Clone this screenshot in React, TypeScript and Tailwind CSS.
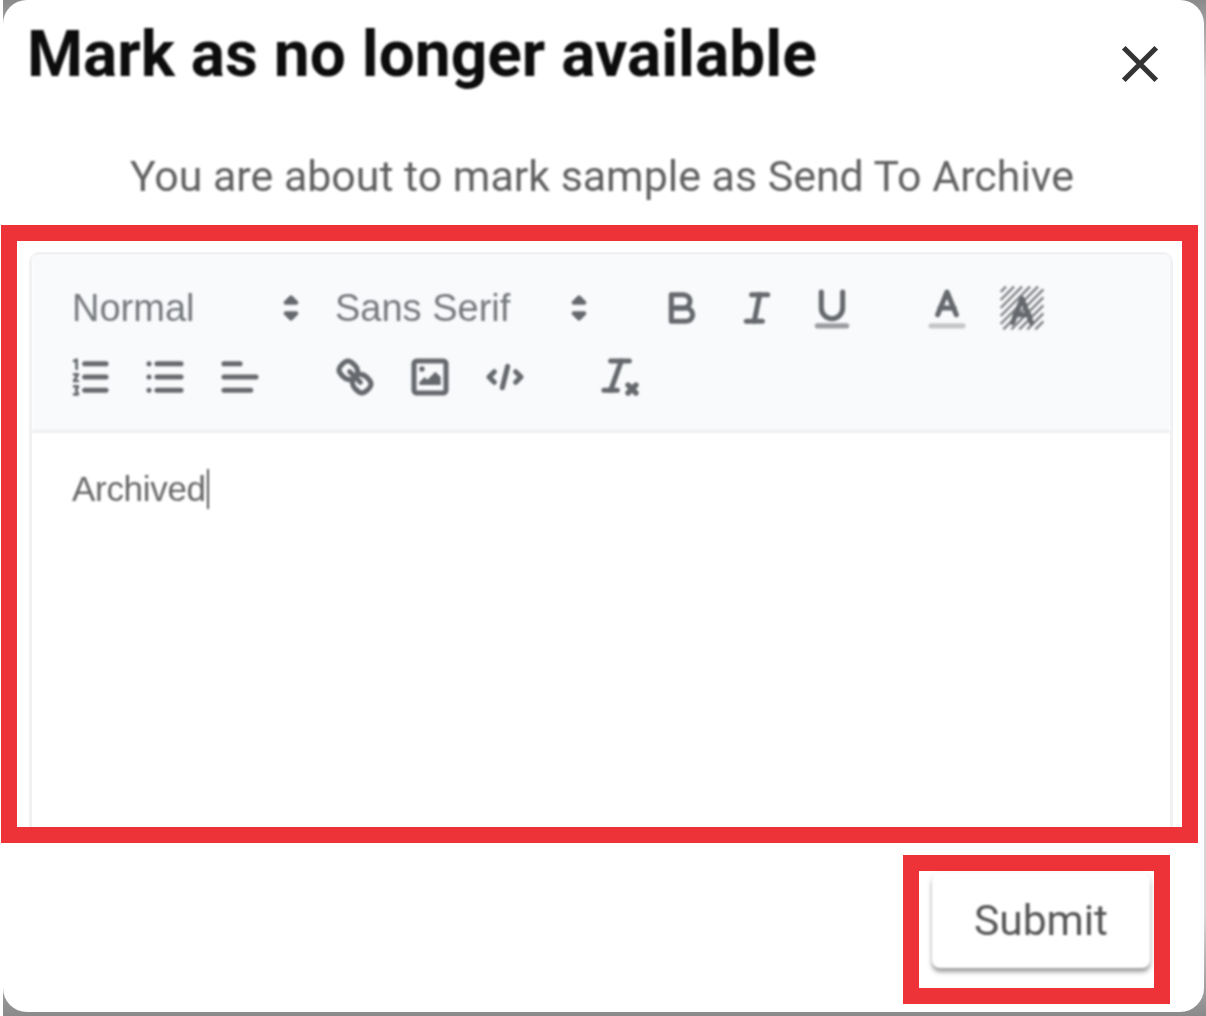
const iconStroke = "fill-none stroke-[#65686c] stroke-[1.9px] [stroke-linecap:round] [stroke-linejoin:round]";

function ToolIcon({ children }: { children: React.ReactNode }) {
  return (
    <button className="w-[75px] h-[64px] shrink-0 flex items-center justify-center">
      <svg viewBox="0 0 18 18" className={"w-[48px] h-[48px] " + iconStroke}>
        {children}
      </svg>
    </button>
  );
}

function Picker({ label, width }: { label: string; width: string }) {
  return (
    <div className={"relative h-[64px] shrink-0 flex items-center pl-[21px] " + width}>
      <span className="text-[38px] text-[#75787c] font-['Liberation_Sans',sans-serif]">{label}</span>
      <svg viewBox="0 0 18 18" className="absolute -right-[1px] top-[8px] w-[48px] h-[48px] fill-[#65686c] stroke-[#65686c] stroke-[1.5px] [stroke-linejoin:round]">
        <polygon points="7 11 9 13 11 11 7 11" />
        <polygon points="7 7 9 5 11 7 7 7" />
      </svg>
    </div>
  );
}

export default function App() {
  return (
    <div className="w-[1206px] h-[1016px] overflow-hidden pl-[3px] bg-[linear-gradient(to_right,#fff_3px,transparent_3px),linear-gradient(to_bottom,#8a8a8a,#d6d6d6_8%,#d6d6d6_90%,#8a8a8a)] font-['Roboto',sans-serif]">
      <div className="w-[1201px] h-[1012px] bg-white rounded-[24px] flex flex-col">
        {/* header */}
        <div className="h-[118px] pl-[24px] pr-[38px] flex items-start justify-between">
          <h1 className="mt-[18px] text-[64px] leading-[74px] font-bold text-[#0c0c0c] blur-[1px]">
            Mark as no longer available
          </h1>
          <svg viewBox="0 0 24 24" className="mt-[38px] w-[52px] h-[52px] fill-none stroke-[#333] stroke-[2.4px] blur-[0.6px]">
            <path d="M4.5 4.5 19.5 19.5M19.5 4.5 4.5 19.5" />
          </svg>
        </div>

        <p className="h-[107px] pt-[30px] pr-[3px] text-center text-[42.9px] leading-[56px] text-[#606060] blur-[1px]">
          You are about to mark sample as Send To Archive
        </p>

        {/* editor, with the red annotation frame round it */}
        <div className="-ml-[2px] w-[1197px] h-[618px] border-[16px] border-[#ee3338] pl-[12px] pr-[9px] pt-[11px] overflow-hidden">
          <div className="h-full border-[3px] border-b-0 border-[#f0f1f2] rounded-t-[10px]">
            <div className="h-[178px] bg-[#f9fafc] border-b-[3px] border-[#eeeff1] pl-[19px] pt-[21px] flex flex-wrap content-start gap-y-[5px] blur-[1.2px]">
              <Picker label="Normal" width="w-[263px]" />
              <Picker label="Sans Serif" width="w-[288px]" />
              <div className="ml-[42px] flex">
                <ToolIcon>
                  <path d="M5,4H9.5A2.5,2.5,0,0,1,12,6.5v0A2.5,2.5,0,0,1,9.5,9H5V4Z" />
                  <path d="M5,9h5.5A2.5,2.5,0,0,1,13,11.5v0A2.5,2.5,0,0,1,10.5,14H5V9Z" />
                </ToolIcon>
                <ToolIcon>
                  <line x1="7" x2="13" y1="4" y2="4" />
                  <line x1="5" x2="11" y1="14" y2="14" />
                  <line x1="8" x2="10" y1="14" y2="4" />
                </ToolIcon>
                <ToolIcon>
                  <path d="M5,3V9a4,4,0,0,0,4,4H9a4,4,0,0,0,4-4V3" />
                  <line x1="3.5" x2="14.5" y1="15.7" y2="15.7" className="stroke-[#9a9ca0]" />
                </ToolIcon>
              </div>
              <div className="ml-[40px] flex">
                <ToolIcon>
                  <line x1="3" x2="15" y1="15.7" y2="15.7" className="stroke-[#c4c6c8]" />
                  <polyline points="5.5 11.5 9 3 12.5 11.5" />
                  <line x1="11.63" x2="6.38" y1="9" y2="9" />
                </ToolIcon>
                <ToolIcon>
                  <g className="stroke-[#7d7f82] stroke-[0.9px] [stroke-linecap:butt]">
                    <path d="M1 3 3 1M1 6 6 1M1 9 9 1M1 12 12 1M1 15 15 1M2 17 17 2M5 17 17 5M8 17 17 8M11 17 17 11M14 17 17 14" />
                  </g>
                  <polyline points="5.5 14.5 9 5.5 12.5 14.5" />
                  <line x1="11.63" x2="6.38" y1="11.5" y2="11.5" />
                </ToolIcon>
              </div>
              <div className="w-full h-0" />
              <div className="flex ml-[1px] -mt-[5px]">
                <ToolIcon>
                  <line x1="7" x2="15" y1="4" y2="4" />
                  <line x1="7" x2="15" y1="9" y2="9" />
                  <line x1="7" x2="15" y1="14" y2="14" />
                  <path className="stroke-[1px]" d="M3 3 4 2.5V6M3 8h1.5L3 10.5h1.5M3 12.5h1.5L3.8 14l.7 1.5H3" />
                </ToolIcon>
                <ToolIcon>
                  <line x1="6" x2="15" y1="4" y2="4" />
                  <line x1="6" x2="15" y1="9" y2="9" />
                  <line x1="6" x2="15" y1="14" y2="14" />
                  <line x1="3" x2="3" y1="4" y2="4" />
                  <line x1="3" x2="3" y1="9" y2="9" />
                  <line x1="3" x2="3" y1="14" y2="14" />
                </ToolIcon>
                <ToolIcon>
                  <line x1="3" x2="15" y1="9" y2="9" />
                  <line x1="3" x2="13" y1="14" y2="14" />
                  <line x1="3" x2="9" y1="4" y2="4" />
                </ToolIcon>
              </div>
              <div className="ml-[40px] -mt-[5px] flex">
                <ToolIcon>
                  <line x1="7" x2="11" y1="7" y2="11" />
                  <path d="M8.9,4.577a3.476,3.476,0,0,1,.36,4.679A3.476,3.476,0,0,1,4.577,8.9C3.185,7.5,2.035,6.4,4.217,4.217S7.5,3.185,8.9,4.577Z" />
                  <path d="M13.423,9.1a3.476,3.476,0,0,0-4.679-.36,3.476,3.476,0,0,0,.36,4.679c1.392,1.392,2.5,2.542,4.679.36S14.815,10.5,13.423,9.1Z" />
                </ToolIcon>
                <ToolIcon>
                  <rect x="3" y="3" width="12" height="12" rx="1" ry="1" />
                  <circle cx="6" cy="6" r="1" className="fill-[#65686c] stroke-none" />
                  <polyline points="5 12 5 11 7 9 8 10 11 7 13 9 13 12 5 12" className="fill-[#65686c] stroke-none" />
                </ToolIcon>
                <ToolIcon>
                  <polyline points="5 7 3 9 5 11" />
                  <polyline points="13 7 15 9 13 11" />
                  <line x1="10" x2="8" y1="5" y2="13" />
                </ToolIcon>
              </div>
              <div className="ml-[40px] -mt-[5px] flex">
                <ToolIcon>
                  <line x1="5.5" x2="12.5" y1="3" y2="3" />
                  <line x1="3" x2="8" y1="14" y2="14" />
                  <line x1="9.5" x2="5.5" y1="3" y2="14" />
                  <path className="stroke-[2px]" d="M12 12 15 15M15 12 12 15" />
                </ToolIcon>
              </div>
            </div>
            <div className="pl-[40px] pt-[32px] text-[35px] leading-[48px] text-[#666] font-['Liberation_Sans',sans-serif] tracking-[-0.3px] blur-[0.8px]">
              Archived<span className="inline-block w-[2px] h-[40px] align-[-8px] bg-[#555] ml-[1px]" />
            </div>
          </div>
        </div>

        {/* submit, with its red frame */}
        <div className="flex justify-end pr-[34px] pt-[12px]">
          <div className="w-[267px] h-[149px] border-[16px] border-[#ee3338] pl-[13px] pt-[2px]">
            <button className="w-[218px] h-[95px] bg-white rounded-[8px] shadow-[0_4px_4px_rgba(0,0,0,0.38),0_0_6px_rgba(0,0,0,0.05)] text-[42.5px] text-[#555] blur-[0.8px]">
              Submit
            </button>
          </div>
        </div>
      </div>
    </div>
  );
}
